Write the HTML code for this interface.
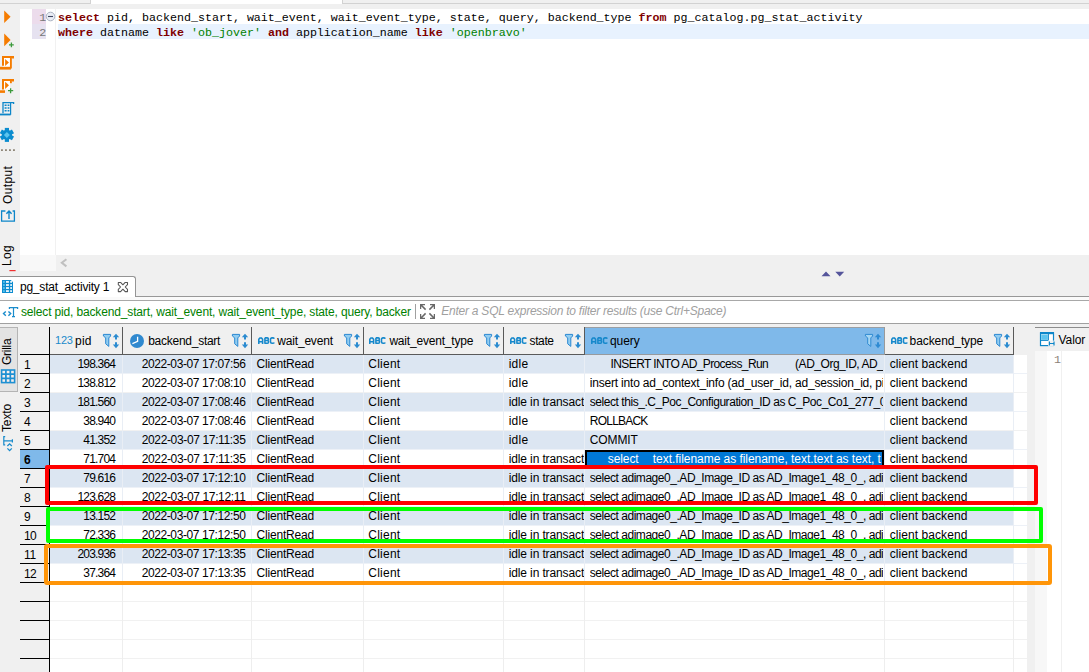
<!DOCTYPE html>
<html><head><meta charset="utf-8"><title>DBeaver</title>
<style>
html,body{margin:0;padding:0}
body{width:1089px;height:672px;overflow:hidden;position:relative;background:#f0f0f0;font:12px/16px 'Liberation Sans',sans-serif;color:#000}
#r{position:absolute;left:0;top:0;width:1089px;height:672px;overflow:hidden}
#r>div,#r>svg{position:absolute;box-sizing:content-box}
.t{position:absolute;white-space:pre;font:12px/16px 'Liberation Sans',sans-serif;color:#000}
.m{font-family:'Liberation Mono',monospace;font-size:11.66px}
.code b{color:#800000;font-weight:bold}
.code i{color:#008000;font-style:normal}
</style></head>
<body><div id="r">
<div style="left:0px;top:0px;width:1089px;height:9px;background:#f0f0f0;"></div>
<div style="left:91px;top:0px;width:251px;height:4px;background:#fff;"></div>
<div style="left:0px;top:0px;width:90px;height:3px;background:#f0f0f0;border-right:1px solid #d2d2d2;border-bottom:1px solid #d2d2d2;"></div>
<div style="left:342px;top:0px;width:747px;height:3px;background:#f0f0f0;border-left:1px solid #d2d2d2;border-bottom:1px solid #d2d2d2;"></div>
<div style="left:0px;top:9px;width:20px;height:268px;background:#f0f0f0;"></div>
<div style="left:20px;top:9px;width:1069px;height:246px;background:#fff;"></div>
<div style="left:32px;top:9px;width:14px;height:15px;background:#ecdcec;"></div>
<div style="left:32px;top:24px;width:14px;height:15px;background:#e6e2f0;"></div>
<div style="left:55px;top:9px;width:1px;height:246px;background:#f1f1f1;"></div>
<div style="left:58px;top:24px;width:1031px;height:15px;background:#e8f2fe;"></div>
<div style="left:20px;top:255px;width:1069px;height:16px;background:#f0f0f0;"></div>
<div style="left:20px;top:255px;width:36px;height:16px;background:#f8f8f8;"></div>
<div style="left:0px;top:271px;width:1089px;height:30px;background:#f0f0f0;"></div>
<div style="left:135px;top:296px;width:954px;height:1px;background:#989898;"></div>
<div style="left:0px;top:297px;width:1089px;height:3px;background:#fafafa;"></div>
<div style="left:0px;top:276px;width:135px;height:20px;background:#fff;border-top:1px solid #949494;border-right:1px solid #949494;border-top-right-radius:3px;"></div>
<div style="left:0px;top:300px;width:1089px;height:1px;background:#a8a8a8;"></div>
<div style="left:0px;top:301px;width:1089px;height:22px;background:#fff;"></div>
<div style="left:0px;top:323px;width:1089px;height:1px;background:#a0a0a0;"></div>
<div style="left:0px;top:324px;width:1089px;height:348px;background:#f0f0f0;"></div>
<div style="left:415px;top:304px;width:1px;height:15px;background:#a0a0a0;"></div>
<div style="left:50px;top:355px;width:977px;height:317px;background:#fff;"></div>
<div style="left:0px;top:327px;width:17px;height:63px;background:#e3e3e3;border:1px solid #b4b4b4;border-left:none;"></div>
<div style="left:585px;top:327px;width:299px;height:26px;background:#7fb9ea;border-top:1px solid #9a9fa4;"></div>
<div style="left:20px;top:354px;width:30px;height:1px;background:#000;"></div>
<div style="left:50px;top:354px;width:964px;height:1px;background:#5a5a5a;"></div>
<div style="left:585px;top:354px;width:299px;height:1px;background:#979a9e;"></div>
<div style="left:50px;top:355px;width:964px;height:18px;background:#dce6f2;"></div>
<div style="left:50px;top:373px;width:977px;height:1px;background:#edf1f7;"></div>
<div style="left:20px;top:373px;width:30px;height:1px;background:#000;"></div>
<div style="left:50px;top:392px;width:977px;height:1px;background:#f1f1f1;"></div>
<div style="left:20px;top:392px;width:30px;height:1px;background:#000;"></div>
<div style="left:50px;top:393px;width:964px;height:18px;background:#dce6f2;"></div>
<div style="left:50px;top:411px;width:977px;height:1px;background:#edf1f7;"></div>
<div style="left:20px;top:411px;width:30px;height:1px;background:#000;"></div>
<div style="left:50px;top:430px;width:977px;height:1px;background:#f1f1f1;"></div>
<div style="left:20px;top:430px;width:30px;height:1px;background:#000;"></div>
<div style="left:50px;top:431px;width:964px;height:18px;background:#dce6f2;"></div>
<div style="left:50px;top:449px;width:977px;height:1px;background:#edf1f7;"></div>
<div style="left:20px;top:449px;width:30px;height:1px;background:#000;"></div>
<div style="left:50px;top:468px;width:977px;height:1px;background:#f1f1f1;"></div>
<div style="left:20px;top:468px;width:30px;height:1px;background:#000;"></div>
<div style="left:50px;top:469px;width:964px;height:18px;background:#dce6f2;"></div>
<div style="left:50px;top:487px;width:977px;height:1px;background:#edf1f7;"></div>
<div style="left:20px;top:487px;width:30px;height:1px;background:#000;"></div>
<div style="left:50px;top:506px;width:977px;height:1px;background:#f1f1f1;"></div>
<div style="left:20px;top:506px;width:30px;height:1px;background:#000;"></div>
<div style="left:50px;top:507px;width:964px;height:18px;background:#dce6f2;"></div>
<div style="left:50px;top:525px;width:977px;height:1px;background:#edf1f7;"></div>
<div style="left:20px;top:525px;width:30px;height:1px;background:#000;"></div>
<div style="left:50px;top:544px;width:977px;height:1px;background:#f1f1f1;"></div>
<div style="left:20px;top:544px;width:30px;height:1px;background:#000;"></div>
<div style="left:50px;top:545px;width:964px;height:18px;background:#dce6f2;"></div>
<div style="left:50px;top:563px;width:977px;height:1px;background:#edf1f7;"></div>
<div style="left:20px;top:563px;width:30px;height:1px;background:#000;"></div>
<div style="left:50px;top:582px;width:977px;height:1px;background:#f1f1f1;"></div>
<div style="left:20px;top:582px;width:30px;height:1px;background:#000;"></div>
<div style="left:50px;top:601px;width:977px;height:1px;background:#f1f1f1;"></div>
<div style="left:20px;top:601px;width:30px;height:1px;background:#000;"></div>
<div style="left:50px;top:620px;width:977px;height:1px;background:#f1f1f1;"></div>
<div style="left:20px;top:620px;width:30px;height:1px;background:#000;"></div>
<div style="left:50px;top:639px;width:977px;height:1px;background:#f1f1f1;"></div>
<div style="left:20px;top:639px;width:30px;height:1px;background:#000;"></div>
<div style="left:50px;top:658px;width:977px;height:1px;background:#f1f1f1;"></div>
<div style="left:20px;top:658px;width:30px;height:1px;background:#000;"></div>
<div style="left:50px;top:677px;width:977px;height:1px;background:#f1f1f1;"></div>
<div style="left:20px;top:677px;width:30px;height:1px;background:#000;"></div>
<div style="left:20px;top:450px;width:29px;height:18px;background:#7fb9ea;"></div>
<div style="left:49px;top:327px;width:1px;height:345px;background:#000;"></div>
<div style="left:122px;top:327px;width:1px;height:28px;background:#5a5a5a;"></div>
<div style="left:122px;top:355px;width:1px;height:228px;background:#e9eef5;"></div>
<div style="left:122px;top:583px;width:1px;height:89px;background:#eeeeee;"></div>
<div style="left:251px;top:327px;width:1px;height:28px;background:#5a5a5a;"></div>
<div style="left:251px;top:355px;width:1px;height:228px;background:#e9eef5;"></div>
<div style="left:251px;top:583px;width:1px;height:89px;background:#eeeeee;"></div>
<div style="left:363px;top:327px;width:1px;height:28px;background:#5a5a5a;"></div>
<div style="left:363px;top:355px;width:1px;height:228px;background:#e9eef5;"></div>
<div style="left:363px;top:583px;width:1px;height:89px;background:#eeeeee;"></div>
<div style="left:503px;top:327px;width:1px;height:28px;background:#5a5a5a;"></div>
<div style="left:503px;top:355px;width:1px;height:228px;background:#e9eef5;"></div>
<div style="left:503px;top:583px;width:1px;height:89px;background:#eeeeee;"></div>
<div style="left:584px;top:327px;width:1px;height:28px;background:#5a5a5a;"></div>
<div style="left:584px;top:355px;width:1px;height:228px;background:#e9eef5;"></div>
<div style="left:584px;top:583px;width:1px;height:89px;background:#eeeeee;"></div>
<div style="left:884px;top:327px;width:1px;height:28px;background:#9a9a9a;"></div>
<div style="left:884px;top:355px;width:1px;height:228px;background:#e9eef5;"></div>
<div style="left:884px;top:583px;width:1px;height:89px;background:#eeeeee;"></div>
<div style="left:1013px;top:327px;width:1px;height:28px;background:#5a5a5a;"></div>
<div style="left:1013px;top:355px;width:1px;height:228px;background:#e9eef5;"></div>
<div style="left:1013px;top:583px;width:1px;height:89px;background:#eeeeee;"></div>
<div style="left:1027px;top:355px;width:1px;height:317px;background:#f0f0f0;"></div>
<div style="left:585px;top:450px;width:295px;height:14px;background:#0078d7;border:2px solid #000;"></div>
<div style="left:1035px;top:327px;width:54px;height:1px;background:#8c8c8c;"></div>
<div style="left:1035px;top:351px;width:54px;height:321px;background:#fff;"></div>
<div style="left:1035px;top:351px;width:12px;height:321px;background:#f7f7f7;"></div>
<div style="left:1061px;top:351px;width:1px;height:321px;background:#f0f0f0;"></div>
<span class="t" style="left:75.00px;top:332.64px;letter-spacing:0.228px;">pid</span>
<span class="t" style="left:148.20px;top:332.64px;letter-spacing:-0.261px;">backend_start</span>
<span class="t" style="left:277.30px;top:332.64px;letter-spacing:-0.187px;">wait_event</span>
<span class="t" style="left:389.40px;top:332.64px;letter-spacing:-0.196px;">wait_event_type</span>
<span class="t" style="left:529.60px;top:332.64px;letter-spacing:-0.403px;">state</span>
<span class="t" style="left:610.00px;top:332.64px;letter-spacing:-0.066px;">query</span>
<span class="t" style="left:909.60px;top:332.64px;letter-spacing:-0.095px;">backend_type</span>
<span class="t" style="left:1058.60px;top:331.64px;letter-spacing:-0.105px;">Valor</span>
<span class="t" style="left:55.00px;top:332.19px;letter-spacing:-0.220px;font-size:11px;color:#1b8bcb;">123</span>
<span class="t" style="left:23.90px;top:356.84px;">1</span>
<span class="t" style="left:23.90px;top:375.84px;">2</span>
<span class="t" style="left:23.90px;top:394.84px;">3</span>
<span class="t" style="left:23.90px;top:413.84px;">4</span>
<span class="t" style="left:23.90px;top:432.84px;">5</span>
<span class="t" style="left:23.90px;top:451.84px;font-weight:bold;">6</span>
<span class="t" style="left:23.90px;top:470.84px;">7</span>
<span class="t" style="left:23.90px;top:489.84px;">8</span>
<span class="t" style="left:23.90px;top:508.84px;">9</span>
<span class="t" style="left:23.90px;top:527.84px;letter-spacing:-0.580px;">10</span>
<span class="t" style="left:23.90px;top:546.84px;letter-spacing:-0.134px;">11</span>
<span class="t" style="left:23.90px;top:565.84px;letter-spacing:-0.580px;">12</span>
<span class="t" style="left:77.41px;top:355.84px;letter-spacing:-0.800px;">198.364</span>
<span class="t" style="left:141.70px;top:355.84px;letter-spacing:-0.402px;">2022-03-07 17:07:56</span>
<span class="t" style="left:256.50px;top:355.84px;letter-spacing:-0.178px;">ClientRead</span>
<span class="t" style="left:368.30px;top:355.84px;letter-spacing:0.235px;">Client</span>
<span class="t" style="left:508.70px;top:355.84px;letter-spacing:0.228px;">idle</span>
<span class="t" style="left:889.70px;top:355.84px;letter-spacing:0.070px;">client backend</span>
<span class="t" style="left:77.41px;top:374.84px;letter-spacing:-0.800px;">138.812</span>
<span class="t" style="left:141.70px;top:374.84px;letter-spacing:-0.402px;">2022-03-07 17:08:10</span>
<span class="t" style="left:256.50px;top:374.84px;letter-spacing:-0.178px;">ClientRead</span>
<span class="t" style="left:368.30px;top:374.84px;letter-spacing:0.235px;">Client</span>
<span class="t" style="left:508.70px;top:374.84px;letter-spacing:0.228px;">idle</span>
<span class="t" style="left:889.70px;top:374.84px;letter-spacing:0.070px;">client backend</span>
<span class="t" style="left:77.41px;top:393.84px;letter-spacing:-0.800px;">181.560</span>
<span class="t" style="left:141.70px;top:393.84px;letter-spacing:-0.402px;">2022-03-07 17:08:46</span>
<span class="t" style="left:256.50px;top:393.84px;letter-spacing:-0.178px;">ClientRead</span>
<span class="t" style="left:368.30px;top:393.84px;letter-spacing:0.235px;">Client</span>
<span class="t" style="left:508.70px;top:393.84px;letter-spacing:-0.123px;width:75.30px;overflow:hidden;">idle in transaction</span>
<span class="t" style="left:889.70px;top:393.84px;letter-spacing:0.070px;">client backend</span>
<span class="t" style="left:83.30px;top:412.84px;letter-spacing:-0.800px;">38.940</span>
<span class="t" style="left:141.70px;top:412.84px;letter-spacing:-0.402px;">2022-03-07 17:08:46</span>
<span class="t" style="left:256.50px;top:412.84px;letter-spacing:-0.178px;">ClientRead</span>
<span class="t" style="left:368.30px;top:412.84px;letter-spacing:0.235px;">Client</span>
<span class="t" style="left:508.70px;top:412.84px;letter-spacing:0.228px;">idle</span>
<span class="t" style="left:889.70px;top:412.84px;letter-spacing:0.070px;">client backend</span>
<span class="t" style="left:83.30px;top:431.84px;letter-spacing:-0.800px;">41.352</span>
<span class="t" style="left:141.70px;top:431.84px;letter-spacing:-0.355px;">2022-03-07 17:11:35</span>
<span class="t" style="left:256.50px;top:431.84px;letter-spacing:-0.178px;">ClientRead</span>
<span class="t" style="left:368.30px;top:431.84px;letter-spacing:0.235px;">Client</span>
<span class="t" style="left:508.70px;top:431.84px;letter-spacing:0.228px;">idle</span>
<span class="t" style="left:889.70px;top:431.84px;letter-spacing:0.070px;">client backend</span>
<span class="t" style="left:83.30px;top:450.84px;letter-spacing:-0.800px;">71.704</span>
<span class="t" style="left:141.70px;top:450.84px;letter-spacing:-0.355px;">2022-03-07 17:11:35</span>
<span class="t" style="left:256.50px;top:450.84px;letter-spacing:-0.178px;">ClientRead</span>
<span class="t" style="left:368.30px;top:450.84px;letter-spacing:0.235px;">Client</span>
<span class="t" style="left:508.70px;top:450.84px;letter-spacing:-0.123px;width:75.30px;overflow:hidden;">idle in transaction</span>
<span class="t" style="left:889.70px;top:450.84px;letter-spacing:0.070px;">client backend</span>
<span class="t" style="left:83.30px;top:469.84px;letter-spacing:-0.800px;">79.616</span>
<span class="t" style="left:141.70px;top:469.84px;letter-spacing:-0.402px;">2022-03-07 17:12:10</span>
<span class="t" style="left:256.50px;top:469.84px;letter-spacing:-0.178px;">ClientRead</span>
<span class="t" style="left:368.30px;top:469.84px;letter-spacing:0.235px;">Client</span>
<span class="t" style="left:508.70px;top:469.84px;letter-spacing:-0.123px;width:75.30px;overflow:hidden;">idle in transaction</span>
<span class="t" style="left:889.70px;top:469.84px;letter-spacing:0.070px;">client backend</span>
<span class="t" style="left:589.80px;top:469.84px;letter-spacing:-0.462px;width:293.20px;overflow:hidden;">select adimage0_.AD_Image_ID as AD_Image1_48_0_, adimage0_</span>
<span class="t" style="left:77.41px;top:488.84px;letter-spacing:-0.800px;">123.628</span>
<span class="t" style="left:141.70px;top:488.84px;letter-spacing:-0.355px;">2022-03-07 17:12:11</span>
<span class="t" style="left:256.50px;top:488.84px;letter-spacing:-0.178px;">ClientRead</span>
<span class="t" style="left:368.30px;top:488.84px;letter-spacing:0.235px;">Client</span>
<span class="t" style="left:508.70px;top:488.84px;letter-spacing:-0.123px;width:75.30px;overflow:hidden;">idle in transaction</span>
<span class="t" style="left:889.70px;top:488.84px;letter-spacing:0.070px;">client backend</span>
<span class="t" style="left:589.80px;top:488.84px;letter-spacing:-0.462px;width:293.20px;overflow:hidden;">select adimage0_.AD_Image_ID as AD_Image1_48_0_, adimage0_</span>
<span class="t" style="left:83.30px;top:507.84px;letter-spacing:-0.800px;">13.152</span>
<span class="t" style="left:141.70px;top:507.84px;letter-spacing:-0.402px;">2022-03-07 17:12:50</span>
<span class="t" style="left:256.50px;top:507.84px;letter-spacing:-0.178px;">ClientRead</span>
<span class="t" style="left:368.30px;top:507.84px;letter-spacing:0.235px;">Client</span>
<span class="t" style="left:508.70px;top:507.84px;letter-spacing:-0.123px;width:75.30px;overflow:hidden;">idle in transaction</span>
<span class="t" style="left:889.70px;top:507.84px;letter-spacing:0.070px;">client backend</span>
<span class="t" style="left:589.80px;top:507.84px;letter-spacing:-0.462px;width:293.20px;overflow:hidden;">select adimage0_.AD_Image_ID as AD_Image1_48_0_, adimage0_</span>
<span class="t" style="left:83.30px;top:526.84px;letter-spacing:-0.800px;">72.336</span>
<span class="t" style="left:141.70px;top:526.84px;letter-spacing:-0.402px;">2022-03-07 17:12:50</span>
<span class="t" style="left:256.50px;top:526.84px;letter-spacing:-0.178px;">ClientRead</span>
<span class="t" style="left:368.30px;top:526.84px;letter-spacing:0.235px;">Client</span>
<span class="t" style="left:508.70px;top:526.84px;letter-spacing:-0.123px;width:75.30px;overflow:hidden;">idle in transaction</span>
<span class="t" style="left:889.70px;top:526.84px;letter-spacing:0.070px;">client backend</span>
<span class="t" style="left:589.80px;top:526.84px;letter-spacing:-0.462px;width:293.20px;overflow:hidden;">select adimage0_.AD_Image_ID as AD_Image1_48_0_, adimage0_</span>
<span class="t" style="left:77.41px;top:545.84px;letter-spacing:-0.800px;">203.936</span>
<span class="t" style="left:141.70px;top:545.84px;letter-spacing:-0.402px;">2022-03-07 17:13:35</span>
<span class="t" style="left:256.50px;top:545.84px;letter-spacing:-0.178px;">ClientRead</span>
<span class="t" style="left:368.30px;top:545.84px;letter-spacing:0.235px;">Client</span>
<span class="t" style="left:508.70px;top:545.84px;letter-spacing:-0.123px;width:75.30px;overflow:hidden;">idle in transaction</span>
<span class="t" style="left:889.70px;top:545.84px;letter-spacing:0.070px;">client backend</span>
<span class="t" style="left:589.80px;top:545.84px;letter-spacing:-0.462px;width:293.20px;overflow:hidden;">select adimage0_.AD_Image_ID as AD_Image1_48_0_, adimage0_</span>
<span class="t" style="left:83.30px;top:564.84px;letter-spacing:-0.800px;">37.364</span>
<span class="t" style="left:141.70px;top:564.84px;letter-spacing:-0.402px;">2022-03-07 17:13:35</span>
<span class="t" style="left:256.50px;top:564.84px;letter-spacing:-0.178px;">ClientRead</span>
<span class="t" style="left:368.30px;top:564.84px;letter-spacing:0.235px;">Client</span>
<span class="t" style="left:508.70px;top:564.84px;letter-spacing:-0.123px;width:75.30px;overflow:hidden;">idle in transaction</span>
<span class="t" style="left:889.70px;top:564.84px;letter-spacing:0.070px;">client backend</span>
<span class="t" style="left:589.80px;top:564.84px;letter-spacing:-0.462px;width:293.20px;overflow:hidden;">select adimage0_.AD_Image_ID as AD_Image1_48_0_, adimage0_</span>
<span class="t" style="left:610.60px;top:355.84px;letter-spacing:-0.612px;">INSERT INTO AD_Process_Run</span>
<span class="t" style="left:795.10px;top:355.84px;letter-spacing:-0.478px;width:87.90px;overflow:hidden;">(AD_Org_ID, AD_Client_ID</span>
<span class="t" style="left:589.80px;top:374.84px;letter-spacing:-0.202px;width:293.20px;overflow:hidden;">insert into ad_context_info (ad_user_id, ad_session_id, pid</span>
<span class="t" style="left:589.80px;top:393.84px;letter-spacing:-0.446px;width:293.20px;overflow:hidden;">select this_.C_Poc_Configuration_ID as C_Poc_Co1_277_0_</span>
<span class="t" style="left:589.80px;top:412.84px;letter-spacing:-0.779px;">ROLLBACK</span>
<span class="t" style="left:589.80px;top:431.84px;letter-spacing:-0.109px;">COMMIT</span>
<span class="t" style="left:607.80px;top:450.84px;letter-spacing:-0.093px;color:#fff;">select</span>
<span class="t" style="left:652.80px;top:450.84px;letter-spacing:-0.043px;color:#fff;">text.filename as filename, text.text as text, t</span>
<span class="t" style="left:19.90px;top:279.14px;letter-spacing:-0.184px;">pg_stat_activity 1</span>
<span class="t" style="left:20.90px;top:303.84px;letter-spacing:-0.151px;color:#008000;">select pid, backend_start, wait_event, wait_event_type, state, query, backer</span>
<span class="t" style="left:441.30px;top:302.84px;letter-spacing:-0.244px;color:#a0a0a0;font-style:italic;">Enter a SQL expression to filter results (use Ctrl+Space)</span>
<span class="t m" style="left:39.30px;top:9.89px;font-size:11.66px;color:#787878;">1</span>
<span class="t m" style="left:39.30px;top:24.89px;font-size:11.66px;color:#787878;">2</span>
<span class="t m" style="left:1053.90px;top:351.89px;font-size:11.66px;color:#8c8278;">1</span>
<span class="t m code" style="left:58px;top:9.89px"><b>select</b> pid, backend_start, wait_event, wait_event_type, state, query, backend_type <b>from</b> pg_catalog.pg_stat_activity</span><span class="t m code" style="left:58px;top:24.89px"><b>where</b> datname <b>like</b> <i>&#x27;ob_jover&#x27;</i> <b>and</b> application_name <b>like</b> <i>&#x27;openbravo&#x27;</i></span>
<span class="t" style="left:-0.16px;top:204.20px;transform-origin:0 0;transform:rotate(-90deg);letter-spacing:0.361px">Output</span><span class="t" style="left:-0.66px;top:266.30px;transform-origin:0 0;transform:rotate(-90deg);letter-spacing:0.323px">Log</span><span class="t" style="left:-0.56px;top:364.70px;transform-origin:0 0;transform:rotate(-90deg);letter-spacing:-0.269px">Grilla</span><span class="t" style="left:-1.16px;top:431.60px;transform-origin:0 0;transform:rotate(-90deg);letter-spacing:-0.138px">Texto</span>
<svg style="left:0px;top:8px" width="20" height="18" viewBox="0 0 20 18"><path d="M4.2 2.4 L10.6 8.7 L4.2 15 Z" fill="#f57c00"/></svg>
<svg style="left:0px;top:31px" width="20" height="18" viewBox="0 0 20 18"><path d="M4.2 2.6 L10.6 8.9 L4.2 15.2 Z" fill="#f57c00"/><path d="M11.4 11.4 V16.2 M9 13.8 H13.8" stroke="#3c9a3c" stroke-width="1.3" fill="none"/></svg>
<svg style="left:0px;top:54px" width="20" height="18" viewBox="0 0 20 18"><rect x="3" y="3" width="8" height="10" fill="#fff"/><path d="M3 11.8 V3 H13 V4.6" fill="none" stroke="#f57c00" stroke-width="2"/><path d="M10.9 3.6 V14.5" fill="none" stroke="#f57c00" stroke-width="1.9"/><path d="M0 14.2 H10.9" stroke="#f57c00" stroke-width="2.8" fill="none"/><path d="M5.1 4.9 L9 8.4 L5.1 12 Z" fill="#f57c00"/></svg>
<svg style="left:0px;top:77px" width="20" height="18" viewBox="0 0 20 18"><rect x="3" y="3" width="7" height="9.5" fill="#fff"/><path d="M3 12.6 V3 H13 V4.6" fill="none" stroke="#f57c00" stroke-width="2"/><path d="M10.9 3.6 V6.2" fill="none" stroke="#f57c00" stroke-width="1.9"/><path d="M0 14.6 H5" stroke="#f57c00" stroke-width="2.6" fill="none"/><path d="M5.1 4.8 L9 8.3 L5.1 11.9 Z" fill="#f57c00"/><path d="M10.6 11.2 V16.2 M8 13.7 H13.2" stroke="#3c9a3c" stroke-width="1.3" fill="none"/></svg>
<svg style="left:0px;top:100px" width="20" height="18" viewBox="0 0 20 18"><path d="M3 13.2 V2.6 H13.6 V4" fill="none" stroke="#0d86c9" stroke-width="1.3"/><path d="M10.6 2.6 V14.8" fill="none" stroke="#0d86c9" stroke-width="1.2"/><path d="M0 14.5 H10.6" stroke="#0d86c9" stroke-width="1.8" fill="none"/><path d="M4.6 5.2 H6.6 M7.6 5.2 H9.4 M4.6 8 H6.6 M7.6 8 H9.4 M4.6 10.8 H6.6 M7.6 10.8 H9.4" stroke="#0d86c9" stroke-width="1.5" fill="none"/></svg>
<svg style="left:0px;top:126px" width="20" height="18" viewBox="0 0 20 18"><g transform="translate(6.9 8.9)" fill="#0a8ccf"><circle r="5.1"/><rect x="-2.1" y="-7" width="4.2" height="4" transform="rotate(0)"/><rect x="-2.1" y="-7" width="4.2" height="4" transform="rotate(60)"/><rect x="-2.1" y="-7" width="4.2" height="4" transform="rotate(120)"/><rect x="-2.1" y="-7" width="4.2" height="4" transform="rotate(180)"/><rect x="-2.1" y="-7" width="4.2" height="4" transform="rotate(240)"/><rect x="-2.1" y="-7" width="4.2" height="4" transform="rotate(300)"/></g><path d="M6.9 5.9 L9.9 8.9 L6.9 11.9 L3.9 8.9 Z" fill="#5cc4ee"/></svg>
<svg style="left:0px;top:148px" width="20" height="4" viewBox="0 0 20 4"><path d="M1 2.1 H2.9 M5 2.1 H6.9 M9 2.1 H10.9 M13 2.1 H14.9" stroke="#8e8678" stroke-width="1.9"/></svg>
<svg style="left:0px;top:208px" width="20" height="16" viewBox="0 0 20 16"><path d="M5.4 3 H1.6 V13.2 H14.4 V3 H12.6" fill="none" stroke="#0d86c9" stroke-width="1.3"/><path d="M9 11 V3.2 M6.4 5.8 L9 3 L11.6 5.8" fill="none" stroke="#0d86c9" stroke-width="1.4"/></svg>
<svg style="left:8px;top:268px" width="10" height="5" viewBox="0 0 10 5"><path d="M1.4 2.6 H7.6" stroke="#f03030" stroke-width="1.2"/></svg>
<svg style="left:45px;top:11px" width="12" height="12" viewBox="0 0 12 12"><circle cx="5.5" cy="5.5" r="4.3" fill="#e9edf5" stroke="#a3abbb" stroke-width="0.9"/><path d="M3 5.5 H8" stroke="#3c4460" stroke-width="1.1"/></svg>
<svg style="left:58px;top:257px" width="12" height="12" viewBox="0 0 12 12"><path d="M8.4 2.2 L3.8 5.8 L8.4 9.4" fill="none" stroke="#c0c0c0" stroke-width="2"/></svg>
<svg style="left:818px;top:268px" width="30" height="12" viewBox="0 0 30 12"><path d="M3.5 8.3 L8 3.5 L12.5 8.3 Z M17.3 3.7 L26.2 3.7 L21.75 8.4 Z" fill="#55559b"/></svg>
<svg style="left:0px;top:278px" width="16" height="16" viewBox="0 0 16 16"><path d="M2 1.9 H10.8 L13 4.1 V14.9 H2 Z" fill="#0d8ccf"/><rect x="3" y="3.1" width="1.8" height="1.65" fill="#5cc8f0"/><rect x="6" y="3.1" width="2.9" height="1.65" fill="#fff"/><rect x="10.2" y="3.1" width="1.8" height="1.65" fill="#fff"/><rect x="3" y="6.2" width="1.8" height="1.65" fill="#5cc8f0"/><rect x="6" y="6.2" width="2.9" height="1.65" fill="#fff"/><rect x="10.2" y="6.2" width="1.8" height="1.65" fill="#fff"/><rect x="3" y="9.2" width="1.8" height="1.65" fill="#5cc8f0"/><rect x="6" y="9.2" width="2.9" height="1.65" fill="#fff"/><rect x="10.2" y="9.2" width="1.8" height="1.65" fill="#fff"/><rect x="3" y="12.25" width="1.8" height="1.65" fill="#5cc8f0"/><rect x="6" y="12.25" width="2.9" height="1.65" fill="#fff"/><rect x="10.2" y="12.25" width="1.8" height="1.65" fill="#fff"/><path d="M10.9 1.6 L13.3 4 V1.6 Z" fill="#fff"/></svg>
<svg style="left:116px;top:280px" width="15" height="15" viewBox="0 0 15 15"><path d="M2.3 2.4 H4.6 L6.9 4.8 L9.2 2.4 H11.5 V4.7 L9.2 7 L11.5 9.3 V11.6 H9.2 L6.9 9.2 L4.6 11.6 H2.3 V9.3 L4.6 7 L2.3 4.7 Z" fill="#fff" stroke="#555" stroke-width="1.05" stroke-linejoin="round"/></svg>
<svg style="left:0px;top:304px" width="22" height="16" viewBox="0 0 22 16"><path d="M5.8 7.4 L3.5 9.6 L5.8 11.8 M8.4 7.4 L10.7 9.6 L8.4 11.8" fill="none" stroke="#1a8ccc" stroke-width="1.4"/><path d="M9.4 5 V3.6 H17.6 V5 M13.5 3.6 V12.6 M12 12.6 H15" fill="none" stroke="#1a8ccc" stroke-width="1.2"/></svg>
<svg style="left:420px;top:304px" width="15" height="15" viewBox="0 0 15 15"><path d="M0.5 5 V0.5 H5 M0.8 0.8 L5.6 5.6" fill="none" stroke="#686868" stroke-width="1.5"/><path d="M10 0.5 H14.5 V5 M14.2 0.8 L9.4 5.6" fill="none" stroke="#686868" stroke-width="1.5"/><path d="M0.5 10 V14.5 H5 M0.8 14.2 L5.6 9.4" fill="none" stroke="#686868" stroke-width="1.5"/><path d="M14.5 10 V14.5 H10 M14.2 14.2 L9.4 9.4" fill="none" stroke="#686868" stroke-width="1.5"/></svg>
<svg style="left:102px;top:332px" width="20" height="18" viewBox="0 0 20 18"><path d="M1.4 2.4 H8.6 V4 L6.8 5.9 V14.4 L3.7 11.8 V5.9 L1.4 4 Z" fill="#92cdf1" stroke="#2a88d2" stroke-width="1"/><path d="M10.8 5.3 L14 1.7 L17.2 5.3 Z M10.8 12.6 L14 16.2 L17.2 12.6 Z" fill="#2b8bd0"/><path d="M14 4.6 V7.6 M14 10.2 V13.2" stroke="#2b8bd0" stroke-width="2"/></svg>
<svg style="left:231px;top:332px" width="20" height="18" viewBox="0 0 20 18"><path d="M1.4 2.4 H8.6 V4 L6.8 5.9 V14.4 L3.7 11.8 V5.9 L1.4 4 Z" fill="#92cdf1" stroke="#2a88d2" stroke-width="1"/><path d="M10.8 5.3 L14 1.7 L17.2 5.3 Z M10.8 12.6 L14 16.2 L17.2 12.6 Z" fill="#2b8bd0"/><path d="M14 4.6 V7.6 M14 10.2 V13.2" stroke="#2b8bd0" stroke-width="2"/></svg>
<svg style="left:343px;top:332px" width="20" height="18" viewBox="0 0 20 18"><path d="M1.4 2.4 H8.6 V4 L6.8 5.9 V14.4 L3.7 11.8 V5.9 L1.4 4 Z" fill="#92cdf1" stroke="#2a88d2" stroke-width="1"/><path d="M10.8 5.3 L14 1.7 L17.2 5.3 Z M10.8 12.6 L14 16.2 L17.2 12.6 Z" fill="#2b8bd0"/><path d="M14 4.6 V7.6 M14 10.2 V13.2" stroke="#2b8bd0" stroke-width="2"/></svg>
<svg style="left:483px;top:332px" width="20" height="18" viewBox="0 0 20 18"><path d="M1.4 2.4 H8.6 V4 L6.8 5.9 V14.4 L3.7 11.8 V5.9 L1.4 4 Z" fill="#92cdf1" stroke="#2a88d2" stroke-width="1"/><path d="M10.8 5.3 L14 1.7 L17.2 5.3 Z M10.8 12.6 L14 16.2 L17.2 12.6 Z" fill="#2b8bd0"/><path d="M14 4.6 V7.6 M14 10.2 V13.2" stroke="#2b8bd0" stroke-width="2"/></svg>
<svg style="left:564px;top:332px" width="20" height="18" viewBox="0 0 20 18"><path d="M1.4 2.4 H8.6 V4 L6.8 5.9 V14.4 L3.7 11.8 V5.9 L1.4 4 Z" fill="#92cdf1" stroke="#2a88d2" stroke-width="1"/><path d="M10.8 5.3 L14 1.7 L17.2 5.3 Z M10.8 12.6 L14 16.2 L17.2 12.6 Z" fill="#2b8bd0"/><path d="M14 4.6 V7.6 M14 10.2 V13.2" stroke="#2b8bd0" stroke-width="2"/></svg>
<svg style="left:993px;top:332px" width="20" height="18" viewBox="0 0 20 18"><path d="M1.4 2.4 H8.6 V4 L6.8 5.9 V14.4 L3.7 11.8 V5.9 L1.4 4 Z" fill="#92cdf1" stroke="#2a88d2" stroke-width="1"/><path d="M10.8 5.3 L14 1.7 L17.2 5.3 Z M10.8 12.6 L14 16.2 L17.2 12.6 Z" fill="#2b8bd0"/><path d="M14 4.6 V7.6 M14 10.2 V13.2" stroke="#2b8bd0" stroke-width="2"/></svg>
<svg style="left:864px;top:332px" width="20" height="18" viewBox="0 0 20 18"><path d="M1.4 2.4 H8.6 V4 L6.8 5.9 V14.4 L3.7 11.8 V5.9 L1.4 4 Z" fill="#a6d6f3" stroke="#2f8ad2" stroke-width="1"/><path d="M10.8 5.3 L14 1.7 L17.2 5.3 Z M10.8 12.6 L14 16.2 L17.2 12.6 Z" fill="#2f8bd3"/><path d="M14 4.6 V7.6 M14 10.2 V13.2" stroke="#2f8bd3" stroke-width="2"/></svg>
<svg style="left:129px;top:333px" width="16" height="16" viewBox="0 0 16 16"><circle cx="8" cy="8" r="7" fill="#3089cf"/><path d="M8.6 3.8 V8.4 L3.4 10.6" fill="none" stroke="#fff" stroke-width="1.3"/></svg>
<svg style="left:0px;top:368px" width="17" height="17" viewBox="0 0 17 17"><rect x="1.6" y="2" width="13" height="12.6" fill="#f6eeec" stroke="#1e90d2" stroke-width="1.6"/><path d="M5.9 2 V14.6 M10.3 2 V14.6 M1.6 6.2 H14.6 M1.6 10.4 H14.6" stroke="#1e90d2" stroke-width="1.7"/></svg>
<svg style="left:0px;top:435px" width="17" height="18" viewBox="0 0 17 18"><path d="M5.2 1.7 H3.8 V9.9 H5.2 M3.8 5.8 H12.4 M12.4 4.2 V7.4" fill="none" stroke="#1a8ccc" stroke-width="1.2"/><path d="M7.4 11 L9.6 8.8 L11.8 11 M7.4 13.4 L9.6 15.6 L11.8 13.4" fill="none" stroke="#1a8ccc" stroke-width="1.3"/></svg>
<svg style="left:1039px;top:331px" width="17" height="17" viewBox="0 0 17 17"><rect x="1.5" y="2" width="13" height="12.6" fill="#fff" stroke="#0d86c9" stroke-width="1.2"/><rect x="1" y="1" width="14" height="2.2" fill="#0d86c9"/><rect x="2.2" y="3.6" width="6.6" height="5.2" fill="#5cc4ee"/><path d="M1.5 9.4 H9.4 V3" fill="none" stroke="#0d86c9" stroke-width="1"/><rect x="9.2" y="9.6" width="7" height="6" fill="#f0f0f0"/><path d="M10.4 10.6 V14.4 M15 10.6 V14.4 M10.4 12.5 H15" stroke="#0d86c9" stroke-width="1.2" fill="none"/></svg><svg style="left:257.7px;top:337px" width="17" height="8" viewBox="0 0 17 8"><g fill="none" stroke="#1688cb" stroke-width="1.55" stroke-linejoin="round"><path d="M0.8 7 V2.3 L2.1 0.9 H3.3 L4.6 2.3 V7 M0.8 4.7 H4.6"/><path transform="translate(6.1 0)" d="M0.8 0.85 H3.1 Q4.3 0.85 4.3 2.1 Q4.3 3.4 3.1 3.5 H0.8 M3.2 3.5 Q4.5 3.6 4.5 4.9 Q4.5 6.2 3.2 6.2 H0.8 V0.85"/><path transform="translate(11.7 0)" d="M4.5 1.7 Q4.2 0.85 3 0.85 H2.3 Q0.8 0.85 0.8 2.3 V4.8 Q0.8 6.2 2.3 6.2 H3 Q4.2 6.2 4.5 5.4"/></g></svg><svg style="left:369.2px;top:337px" width="17" height="8" viewBox="0 0 17 8"><g fill="none" stroke="#1688cb" stroke-width="1.55" stroke-linejoin="round"><path d="M0.8 7 V2.3 L2.1 0.9 H3.3 L4.6 2.3 V7 M0.8 4.7 H4.6"/><path transform="translate(6.1 0)" d="M0.8 0.85 H3.1 Q4.3 0.85 4.3 2.1 Q4.3 3.4 3.1 3.5 H0.8 M3.2 3.5 Q4.5 3.6 4.5 4.9 Q4.5 6.2 3.2 6.2 H0.8 V0.85"/><path transform="translate(11.7 0)" d="M4.5 1.7 Q4.2 0.85 3 0.85 H2.3 Q0.8 0.85 0.8 2.3 V4.8 Q0.8 6.2 2.3 6.2 H3 Q4.2 6.2 4.5 5.4"/></g></svg><svg style="left:509.6px;top:337px" width="17" height="8" viewBox="0 0 17 8"><g fill="none" stroke="#1688cb" stroke-width="1.55" stroke-linejoin="round"><path d="M0.8 7 V2.3 L2.1 0.9 H3.3 L4.6 2.3 V7 M0.8 4.7 H4.6"/><path transform="translate(6.1 0)" d="M0.8 0.85 H3.1 Q4.3 0.85 4.3 2.1 Q4.3 3.4 3.1 3.5 H0.8 M3.2 3.5 Q4.5 3.6 4.5 4.9 Q4.5 6.2 3.2 6.2 H0.8 V0.85"/><path transform="translate(11.7 0)" d="M4.5 1.7 Q4.2 0.85 3 0.85 H2.3 Q0.8 0.85 0.8 2.3 V4.8 Q0.8 6.2 2.3 6.2 H3 Q4.2 6.2 4.5 5.4"/></g></svg><svg style="left:591px;top:337px" width="17" height="8" viewBox="0 0 17 8"><g fill="none" stroke="#1688cb" stroke-width="1.55" stroke-linejoin="round"><path d="M0.8 7 V2.3 L2.1 0.9 H3.3 L4.6 2.3 V7 M0.8 4.7 H4.6"/><path transform="translate(6.1 0)" d="M0.8 0.85 H3.1 Q4.3 0.85 4.3 2.1 Q4.3 3.4 3.1 3.5 H0.8 M3.2 3.5 Q4.5 3.6 4.5 4.9 Q4.5 6.2 3.2 6.2 H0.8 V0.85"/><path transform="translate(11.7 0)" d="M4.5 1.7 Q4.2 0.85 3 0.85 H2.3 Q0.8 0.85 0.8 2.3 V4.8 Q0.8 6.2 2.3 6.2 H3 Q4.2 6.2 4.5 5.4"/></g></svg><svg style="left:891px;top:337px" width="17" height="8" viewBox="0 0 17 8"><g fill="none" stroke="#1688cb" stroke-width="1.55" stroke-linejoin="round"><path d="M0.8 7 V2.3 L2.1 0.9 H3.3 L4.6 2.3 V7 M0.8 4.7 H4.6"/><path transform="translate(6.1 0)" d="M0.8 0.85 H3.1 Q4.3 0.85 4.3 2.1 Q4.3 3.4 3.1 3.5 H0.8 M3.2 3.5 Q4.5 3.6 4.5 4.9 Q4.5 6.2 3.2 6.2 H0.8 V0.85"/><path transform="translate(11.7 0)" d="M4.5 1.7 Q4.2 0.85 3 0.85 H2.3 Q0.8 0.85 0.8 2.3 V4.8 Q0.8 6.2 2.3 6.2 H3 Q4.2 6.2 4.5 5.4"/></g></svg>
<div style="left:45px;top:465px;width:993px;height:40px;border:4px solid #ff0000;border-radius:2px;box-sizing:border-box"></div><div style="left:46px;top:506.5px;width:997px;height:36.5px;border:4px solid #00ff00;border-radius:2px;box-sizing:border-box"></div><div style="left:44px;top:544px;width:1008px;height:41px;border:4px solid #ff9508;border-radius:3px;box-sizing:border-box"></div>
</div></body></html>
